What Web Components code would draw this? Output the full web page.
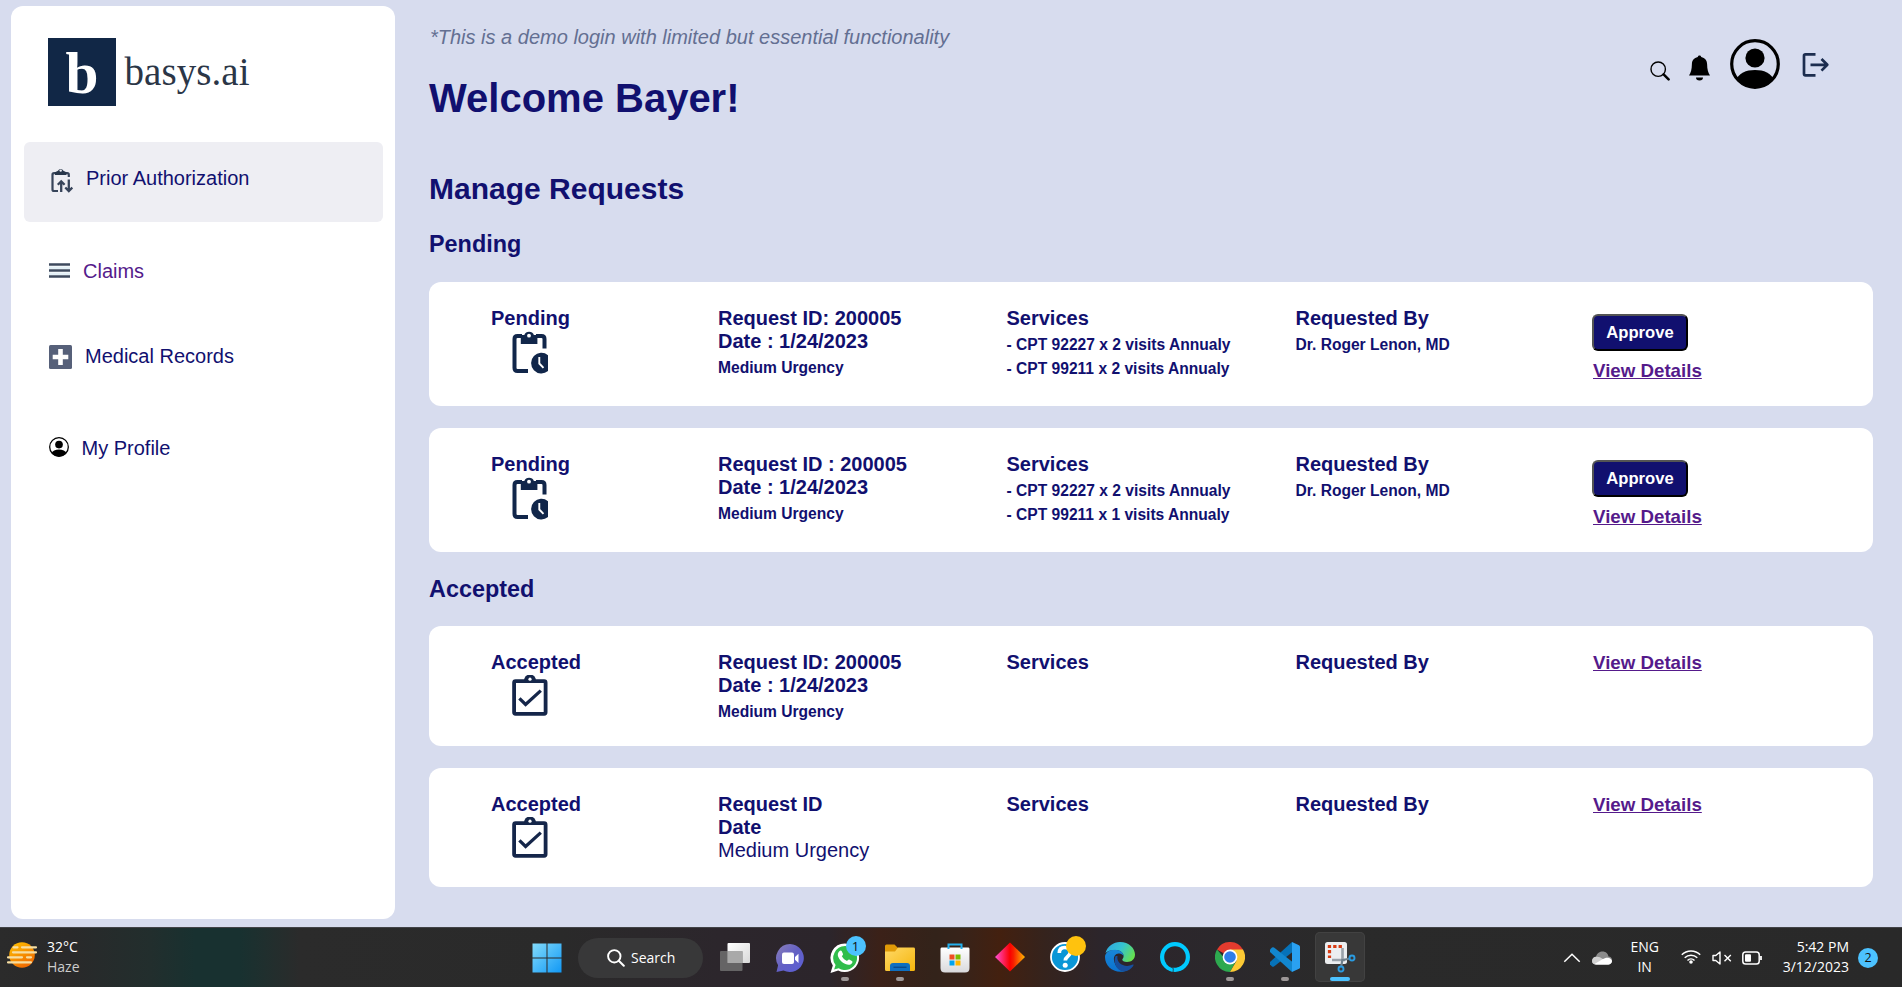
<!DOCTYPE html>
<html lang="en">
<head>
<meta charset="utf-8">
<title>basys.ai - Manage Requests</title>
<style>
html,body{margin:0;padding:0;height:100%;overflow:hidden}
body{font-family:"Liberation Sans",Arial,sans-serif;font-size:20px;line-height:23px;color:#11106f;background:#d7dcee}
</style>
</head>
<body>
<basys-app></basys-app>
<script>
const define = (name, html) => {
  const tpl = document.createElement('template');
  tpl.innerHTML = html;
  customElements.define(name, class extends HTMLElement {
    constructor() {
      super();
      this.attachShadow({mode: 'open'}).appendChild(tpl.content.cloneNode(true));
    }
  });
};

const svg = (w, h, body) => `<svg width="${w}" height="${h}" viewBox="0 0 ${w} ${h}" fill="none">${body}</svg>`;
const person = s => `<svg width="${s}" height="${s}" viewBox="0 0 50 50"><defs><clipPath id="c"><circle cx="25" cy="25" r="24"/></clipPath></defs><circle cx="25" cy="25" r="23.3" fill="none" stroke="#000" stroke-width="3.2"/><circle cx="25" cy="19" r="9.6" fill="#000"/><path clip-path="url(#c)" d="M5 42C9 34 16 31 25 31s16 3 20 11v8H5z" fill="#000"/></svg>`;

const ICONS = {
  prior: svg(23, 26, `<path d="M6.500 6.200H4Q2.500 6.200 2.500 7.700V22.500Q2.500 24 4 24H8M14.500 6.200h2.800q1.500 0 1.500 1.500V10" stroke="#37445a" stroke-width="2.200"/><path d="M5 8V5.200l3-1.500a3 3 0 0 1 5.400 0l3 1.500V8z" fill="#28364a"/><circle cx="10.700" cy="3.600" r="1.200" fill="#eeeef3"/><path d="M11.200 25V14.800M7.800 17.800l3.400-3.500 3.400 3.500M18.800 12.500V24M15.300 20.500l3.500 3.500 3.500-3.500" stroke="#37445a" stroke-width="2.300"/>`),
  menu: svg(21, 16, `<path d="M0 3.500h21v2.500H0zM0 9.500h21v2.500H0z" fill="#e3f0f6"/><path d="M0 1.500h21M0 7.500h21M0 13.500h21" stroke="#3e4a5e" stroke-width="2.400"/>`),
  medical: svg(23, 24, `<rect width="23" height="24" rx="1.5" fill="#566079"/><path d="M11.5 4v16M3.7 12h15.6" stroke="#fff" stroke-width="4.6"/>`),
  profile: person(20),
  avatar: person(50),
  search: svg(20, 20, `<circle cx="8.2" cy="8.2" r="7.2" stroke="#000" stroke-width="1.4"/><path d="M13.6 13.4l5 5" stroke="#000" stroke-width="2.5" stroke-linecap="round"/>`),
  bell: svg(21, 26, `<path d="M10.5 .5c1 0 1.7.7 1.7 1.5 3.9.8 5.8 3.6 5.9 7 .1 5.500 1 8.700 2.900 11.500H0c1.900-2.800 2.800-6 2.900-11.500.1-3.400 2-6.200 5.900-7 0-.8.7-1.500 1.700-1.500z" fill="#000"/><path d="M7 22.600h7a3.500 2.900 0 0 1-7 0z" fill="#000"/>`),
  logout: svg(30, 30, `<rect width="30" height="30" fill="#d5dcf1"/><path d="M15.500 4.300H5.500Q4 4.300 4 5.800v18Q4 25.300 5.500 25.300h10M10.500 14.800h17M21.500 9l5.800 5.800-5.800 5.800" stroke="#1b2d50" stroke-width="2.700" stroke-linejoin="round"/>`),
  pending: svg(36, 44, `<path d="M10 6H5.500Q2.500 6 2.500 9v29q0 3 3 3H16M24 6h5.500q3 0 3 3v9.500" stroke="#11264a" stroke-width="4"/><path d="M8.800 14V5h3.500a5.200 5.200 0 0 1 9.600 0h3.500v9z" fill="#11264a"/><circle cx="17" cy="5.700" r="1.900" fill="#fff"/><path d="M36 25.200a10.300 10.300 0 1 0 0 15.800z" fill="#11264a"/><path d="M27.300 27v6.500l4.200 4.300" stroke="#fff" stroke-width="1.900"/>`),
  accepted: svg(36, 42, `<rect x="2.100" y="6.200" width="31.500" height="32.600" rx="1.500" stroke="#15264a" stroke-width="3.800"/><path d="M12 5.500a6 6 0 0 1 12 0" fill="#15264a"/><circle cx="18" cy="4.200" r="1.600" fill="#fff"/><path d="M7.400 23.300l6.200 6.200L28.800 15.600" stroke="#15264a" stroke-width="3.300"/>`),

  haze: svg(30, 28, `<defs><linearGradient id="g" x1="0" y1="0" x2=".6" y2="1"><stop stop-color="#ffc400"/><stop offset="1" stop-color="#f06a00"/></linearGradient></defs><circle cx="15" cy="14" r="12.800" fill="url(#g)"/><path d="M6.500 6.300h4M15 6.300h14M6 11.300h23M1 16.300h14M20 16.300h4M1 21.300h23" stroke="#f6dea2" stroke-width="2.200" stroke-linecap="round"/>`),
  start: svg(30, 30, `<defs><linearGradient id="g" gradientUnits="userSpaceOnUse" x1="0" y1="0" x2="30" y2="30"><stop stop-color="#84dcfb"/><stop offset="1" stop-color="#0f97f5"/></linearGradient></defs><path d="M.5.5h14v14h-14zM15.500.5h14v14h-14zM.5 15.500h14v14h-14zM15.500 15.500h14v14h-14z" fill="url(#g)"/>`),
  find: svg(18, 18, `<circle cx="7.300" cy="7.300" r="6.200" stroke="#fff" stroke-width="1.900"/><path d="M11.800 11.800l5 5" stroke="#fff" stroke-width="2" stroke-linecap="round"/>`),
  taskview: svg(32, 30, `<defs><linearGradient id="g" x1="0" y1="0" x2="1" y2="1"><stop stop-color="#fff"/><stop offset="1" stop-color="#d8d8d8"/></linearGradient></defs><rect x="8.500" y="1" width="22.500" height="20" rx="1" fill="url(#g)"/><rect x="1" y="9" width="22.500" height="20" rx="1" fill="#707070" fill-opacity=".85"/><path d="M8.500 9h15v12h-15z" fill="#a9a9a9"/>`),
  chat: svg(30, 30, `<defs><linearGradient id="g" x1="0" y1="0" x2="1" y2="1"><stop stop-color="#8b7fb8"/><stop offset=".5" stop-color="#6360c4"/><stop offset="1" stop-color="#5b5fd8"/></linearGradient></defs><path d="M15 1a14 14 0 1 1-6.500 26.500L1.500 29l1.600-6.800A14 14 0 0 1 15 1z" fill="url(#g)"/><rect x="7" y="9.500" width="12" height="11.500" rx="2" fill="#fff"/><path d="M20 14l3.500-3.300v9.300L20 16.800z" fill="#fff"/>`),
  whatsapp: svg(32, 32, `<path d="M16 1.500a14.300 14.300 0 1 1-6.800 27L1.500 31l2.300-7.500A14.300 14.300 0 0 1 16 1.500z" fill="#fff"/><path d="M16 4a12 12 0 1 1-6.300 22.200l-4.600 1.400 1.500-4.500A12 12 0 0 1 16 4z" fill="#30bd4b"/><path d="M10.300 9.200c1-1 2-1 2.500 0l1.200 2.700c.3.700-.7 1.700-1.200 2.200 1 2.200 2.900 4 5.200 5 .7-.7 1.500-1.800 2.200-1.500l2.700 1.300c.9.500.6 1.500 0 2.300-1.500 2-4 1.900-6.500.8-3.500-1.500-6-4-7.200-7.300-.8-2.200-.4-4 1.100-5.500z" fill="#fff"/>`),
  folder: svg(30, 28, `<defs><linearGradient id="g" x1="0" y1="0" x2="1" y2="1"><stop stop-color="#ffd967"/><stop offset="1" stop-color="#f5b50c"/></linearGradient></defs><path d="M0 2q0-1.500 1.500-1.500h8L13 4v5H0z" fill="#e09a07"/><path d="M0 7.500h10L13 3.600h15.500Q30 3.600 30 5v20.500q0 1.500-1.500 1.500h-27Q0 27 0 25.500z" fill="url(#g)"/><path d="M5 27v-5q0-3 3-3h14q3 0 3 3v5z" fill="#0f6fc0"/><path d="M8.500 23.300h13" stroke="#0a4a8c" stroke-width="1.400"/>`),
  store: svg(30, 30, `<defs><linearGradient id="g" x1="0" y1="0" x2="0" y2="1"><stop stop-color="#fff"/><stop offset="1" stop-color="#d9d9dc"/></linearGradient></defs><path d="M1.500 4.500h27Q29.500 4.500 29.500 6v19q0 4.500-4.500 4.500H5Q.5 29.500.5 25V6q0-1.500 1-1.500z" fill="url(#g)"/><path d="M8.500 6V1.500h13V6" stroke="#25b1ee" stroke-width="2"/><path d="M9.500 11.500h5v5h-5z" fill="#f04e23"/><path d="M15.500 11.500h5v5h-5z" fill="#7fba00"/><path d="M9.500 17.500h5v5h-5z" fill="#00a3ee"/><path d="M15.500 17.500h5v5h-5z" fill="#ffb700"/>`),
  diamond: svg(30, 30, `<defs><linearGradient id="g"><stop stop-color="#ff50d8"/><stop offset=".5" stop-color="#fb0000"/><stop offset=".62" stop-color="#f62000"/><stop offset="1" stop-color="#ffb800"/></linearGradient></defs><path d="M15 .5L30 15 15 29.500 0 15z" fill="url(#g)"/>`),
  help: svg(30, 30, `<circle cx="15" cy="15" r="14" fill="#0a96d6" stroke="#fff" stroke-width="1.800"/><path d="M9.300 11c0-4 2.300-5.500 5.400-5.500 3.300 0 5.600 1.700 5.600 4.800 0 4.200-5 4-5 8.200" stroke="#fff" stroke-width="3.700"/><circle cx="15.200" cy="23.300" r="2.500" fill="#fff"/>`),
  edge: svg(30, 30, `<defs><linearGradient id="g" x1="0" y1=".2" x2="1" y2=".6"><stop stop-color="#2fa7e0"/><stop offset=".5" stop-color="#35c3d0"/><stop offset="1" stop-color="#66e04e"/></linearGradient><linearGradient id="h" x1="0" y1="0" x2="0" y2="1"><stop stop-color="#1887d8"/><stop offset="1" stop-color="#0b72cf"/></linearGradient></defs><path d="M.5 11C2.500 4 8.500 0 15 0c9 0 15 6.200 15 12.500 0 4.800-3.600 7.500-8 7.500-3.200 0-4.700-1-4.700-2.200 0-1 1.300-1.500 1.300-3.800C18.600 10.700 15 8 10.500 8 6 8 2.500 9 .5 11z" fill="url(#g)"/><path d="M0 15C0 11 4 7.800 10 7.800c4.900 0 8.500 3 8.600 6.200-1-1.800-3-2.800-5-2.500C9 12 8 16 9.500 20.500 11 25 15 28.500 20 29.200 9 32 0 24.500 0 15z" fill="url(#h)"/><path d="M10.700 14C8 19 10.500 29 19 29.500c4 0 8-3 9.500-6.200.4-.9-.3-1-.8-.7C19.500 26.500 11 21 12.500 14z" fill="#174f9d"/>`),
  alexa: svg(30, 30, `<circle cx="15" cy="15" r="12.900" stroke="#00caff" stroke-width="4.200"/><path d="M9 26.500c3 .3 4.300 1 4 3.300l-3.500-.8z" fill="#00caff"/><path d="M6.500 21.500c1.500 2.800 4.500 3.500 6 4.300 1.200.8.800 2.700.5 4" stroke="#2d262b" stroke-width=".9"/><path d="M14 26.500c4-.7 7-2 9.500-5l1 3.500-5 4H13.800z" fill="#00caff"/>`),
  chrome: svg(30, 30, `<path d="M15 15L2 7.500A15 15 0 0 1 28 7.500z" fill="#e33b2e"/><path d="M15 15H8.500L2 7.500A15 15 0 0 0 15 30l6-11z" fill="#2da94f"/><path d="M15 7.500H28A15 15 0 0 1 15 30l6.500-11.300z" fill="#fcc934"/><circle cx="15" cy="15" r="7.400" fill="#fff"/><circle cx="15" cy="15" r="5.800" fill="#2f7de9"/>`),
  vscode: svg(30, 30, `<path d="M22 0L0 20v2.500l2 2q1 .5 2 0L22.500 10z" fill="#0672b8"/><path d="M22 30L0 10V7.500l2-2q1-.5 2 0L22.500 20z" fill="#1287cf"/><path d="M22 0l7 3.200q1 .6 1 1.500v20.600q0 1-1 1.500L22 30z" fill="#2aa1f1"/>`),
  snip: svg(32, 32, `<rect x="1" y="1" width="22" height="22" rx="2.500" fill="#eceef0"/><path d="M3.800 5.500H18M5.500 9V17" stroke="#d83b12" stroke-width="3.200" stroke-dasharray="3.300 2.100"/><path d="M18.500 7v13M8 19h13" stroke="#9aa2aa" stroke-width="2.600"/><path d="M18.500 18L17.300 25M19 19l7-1.500" stroke="#70808c" stroke-width="2.200"/><circle cx="17" cy="28" r="2.500" stroke="#2a9be0" stroke-width="1.900"/><circle cx="28" cy="17" r="2.500" stroke="#2a9be0" stroke-width="1.900"/>`),
  up: svg(18, 10, `<path d="M1.300 8.700L9 1.200l7.700 7.500" stroke="#fff" stroke-width="1.500"/>`),
  cloud: svg(20, 14, `<path d="M0 10a4 4 0 0 1 4-4.200C5 2 7.800.5 10.500.5c3.500 0 5.500 2.300 6 5a4 4 0 0 1 3.500 4.300c0 2-1.700 3.700-3.500 3.700H4C1.500 13.500 0 12 0 10z" fill="#8c8c8c"/><path d="M0 10c0-2.500 2-4.500 4.500-4.300 2.500-.2 4 .8 6 2l7.500 4.600-1.500 1.200H4C1.500 13.500 0 12 0 10z" fill="#d2d2d2"/><path d="M2.500 13l8-4.700c2.500-1.500 6-2.300 8.300-.3 1 1 1.200 1.500 1.200 2.300 0 1.700-1.700 3.200-3.500 3.200H4z" fill="#fff"/>`),
  wifi: svg(20, 15, `<path d="M.8 5.800a13 13 0 0 1 18.400 0M3.700 8.800a9 9 0 0 1 12.600 0M6.500 11.500a5 5 0 0 1 7 0" stroke="#fff" stroke-width="1.500"/><circle cx="10" cy="13" r="1.800" fill="#fff"/>`),
  mute: svg(20, 14, `<path d="M1 4.500h2.800L8 1v12L3.800 9.500H1z" stroke="#fff" stroke-width="1.400" stroke-linejoin="round"/><path d="M12.500 4l6.300 6.300M18.800 4l-6.300 6.300" stroke="#fff" stroke-width="1.400"/>`),
  battery: svg(20, 14, `<rect x=".8" y="1" width="16.400" height="12" rx="2.800" stroke="#fff" stroke-width="1.500"/><rect x="3" y="3.300" width="6" height="7.400" rx="1" fill="#fff"/><path d="M19 5v4" stroke="#fff" stroke-width="1.800"/>`)
};

customElements.define('ui-icon', class extends HTMLElement {
  connectedCallback() {
    if (this.shadowRoot) return;
    this.attachShadow({mode: 'open'}).innerHTML =
      `<style>:host{display:block;flex:none;line-height:0}svg{display:block}</style>${ICONS[this.getAttribute('name')]}`;
  }
});

define('brand-logo', `<style>
:host{display:flex;align-items:flex-start;box-sizing:border-box;font-family:"Liberation Serif",serif;padding:32px 0 0 37px;height:136px}
.mark{width:68px;height:68px;background:#112746}
svg{display:block;overflow:visible}
</style>
<div class="mark"><svg width="68" height="68"><text x="17.500" y="55" font-size="60" font-weight="700" fill="#fff" textLength="33" lengthAdjust="spacingAndGlyphs">b</text></svg></div>
<svg width="140" height="68"><text x="8.500" y="46.500" font-size="39" fill="#2b3647" textLength="125" lengthAdjust="spacing">basys.ai</text></svg>`);

define('nav-item', `<style>
:host{display:flex;align-items:center;box-sizing:border-box;margin:0 12px 0 13px;padding-left:25px;white-space:nowrap;flex:none}
:host([active]){background:#eeeef3;border-radius:6px;padding-bottom:7px}
:host([visited]){color:#551a8b}
</style><slot name="icon"></slot><slot></slot>`);

define('side-bar', `<style>
:host{display:flex;flex-direction:column;width:384px;height:913px;margin:6px 0 0 11px;background:#fff;border-radius:12px;flex:none}
nav{display:flex;flex-direction:column}
</style>
<brand-logo></brand-logo>
<nav>
<nav-item active style="height:80px"><ui-icon slot="icon" name="prior" style="margin:2px 13px 0 1px"></ui-icon>Prior Authorization</nav-item>
<nav-item visited style="height:98px"><ui-icon slot="icon" name="menu" style="margin-right:13px"></ui-icon>Claims</nav-item>
<nav-item style="height:73px"><ui-icon slot="icon" name="medical" style="margin:1px 13px 0 0"></ui-icon>Medical Records</nav-item>
<nav-item style="height:110px"><ui-icon slot="icon" name="profile" style="margin:0 12.500px 2px 0"></ui-icon>My Profile</nav-item>
</nav>`);

define('header-tools', `<style>
:host{display:flex;align-items:flex-start;padding-right:68px}
</style>
<ui-icon name="search" style="margin:35px 19px 0 0"></ui-icon>
<ui-icon name="bell" style="margin:29px 20px 0 0"></ui-icon>
<ui-icon name="avatar" style="margin:13px 20px 0 0"></ui-icon>
<ui-icon name="logout" style="margin:24px -25px 0 0"></ui-icon>`);

define('request-card', `<style>
:host{display:grid;grid-template-columns:227px 288.500px 289px 296.500px 1fr;box-sizing:border-box;height:124px;padding:25px 0 0 62px;margin-bottom:22px;background:#fff;border-radius:12px;font-weight:700;white-space:nowrap}
</style>
<div><slot name="status"></slot></div><div><slot name="request"></slot></div><div><slot name="services"></slot></div><div><slot name="by"></slot></div><div><slot name="actions"></slot></div>`);

define('small-line', `<style>:host{display:block;font-size:15.600px;line-height:24px}</style><slot></slot>`);

define('view-link', `<style>:host{display:block;padding-left:1px}a{color:#551a8b;font-size:18.720px;text-decoration:underline}</style><a><slot></slot></a>`);

define('approve-button', `<style>:host{display:block;margin:7px 0 5px}
button{display:block;box-sizing:border-box;width:96px;height:37px;padding:0;border:2px outset #000;border-radius:6px;background:#11106f;color:#fff;font:700 16.600px "Liberation Sans",Arial,sans-serif}</style><button><slot></slot></button>`);

const status = s => `<div slot="status">${s}<ui-icon name="${s.toLowerCase()}" style="margin:${s === 'Pending' ? '0' : '1px'} 0 0 21px"></ui-icon></div>`;
const pendingCard = (id, n) => `<request-card>${status('Pending')}
<div slot="request">${id}<br>Date : 1/24/2023<small-line style="margin-top:3px">Medium Urgency</small-line></div>
<div slot="services">Services<small-line style="margin-top:3px">- CPT 92227 x 2 visits Annualy</small-line><small-line>- CPT 99211 x ${n} visits Annualy</small-line></div>
<div slot="by">Requested By<small-line style="margin-top:3px">Dr. Roger Lenon, MD</small-line></div>
<div slot="actions"><approve-button>Approve</approve-button><view-link style="margin-top:8px">View Details</view-link></div></request-card>`;
const acceptedCard = (body, h) => `<request-card style="height:${h}px">${status('Accepted')}
<div slot="request">${body}</div><div slot="services">Services</div><div slot="by">Requested By</div>
<div slot="actions"><view-link>View Details</view-link></div></request-card>`;

define('request-board', `<style>
:host{display:block;flex:1;padding:26px 29px 0 34px}
header{display:flex;justify-content:space-between;height:146px}
.note{font-style:italic;color:#636f92;padding-left:1px}
h1,h2,h3{margin:0;font-weight:700}
h1{font-size:40px;line-height:46px;margin-top:26px}
h2{font-size:30px;line-height:34px}
h3{font-size:23.400px;line-height:27px;padding-top:2px;margin-bottom:23px}
h2+h3{margin-top:23px;margin-bottom:24px}
</style>
<header><div><div class="note">*This is a demo login with limited but essential functionality</div><h1>Welcome Bayer!</h1></div><header-tools></header-tools></header>
<h2>Manage Requests</h2>
<h3>Pending</h3>
${pendingCard('Request ID: 200005', 2)}${pendingCard('Request ID : 200005', 1)}
<h3>Accepted</h3>
${acceptedCard('Request ID: 200005<br>Date : 1/24/2023<small-line style="margin-top:3px">Medium Urgency</small-line>', 120)}
${acceptedCard('Request ID<br>Date<div style="font-weight:400">Medium Urgency</div>', 119)}`);

define('task-slot', `<style>
:host{position:relative;display:flex;align-items:center;justify-content:center;width:55px;height:59px;flex:none}
:host([current])::before{content:"";position:absolute;inset:4px 2px 5px 3px;border-radius:5px;background:#383838;box-shadow:inset 0 0 0 1px #424242}
::slotted(ui-icon){position:relative}
:host([running])::after,:host([current])::after{content:"";position:absolute;left:23.500px;bottom:6px;width:8px;height:4px;border-radius:2px;background:#9d9797}
:host([current])::after{left:17.500px;width:20px;background:#4cc2ff}
::slotted(b){position:absolute;left:28.500px;top:8px;width:20px;height:20px;line-height:20px;border-radius:50%;text-align:center;font-size:13px;font-weight:400;color:#111;background:#4cc2ff;z-index:1}
::slotted(b.warn){background:#ffc20e}
</style><slot></slot>`);

define('task-bar', `<style>
:host{display:grid;grid-template-columns:519px 1fr auto;height:60px;box-sizing:border-box;border-top:1px solid #424347;color:#fff;font:14px/20px "Open Sans","Noto Sans",sans-serif;
background:linear-gradient(90deg,#2b2b2b 0,#29292a 70px,#222e2d 150px,#183130 195px,#183130 240px,#202f2e 265px,#2b2b2b 300px,#2a2a2a 560px,#2c262c 720px,#2c252b 830px,#3b2118 880px,#33231a 935px,#37231a 960px,#43200f 1000px,#35231d 1045px,#2c252b 1100px,#2b282c 1230px,#2a2a2a 1330px,#292929)}
.weather,.apps,.tray{display:flex;align-items:center}
.weather{padding-left:7px;gap:10px}
.weather div{white-space:pre;padding-bottom:1px}
.weather span{color:#ccc}
.search{display:flex;align-items:center;box-sizing:border-box;width:125px;height:40px;margin:0 4px;padding-left:29px;gap:6px;border-radius:20px;background:#383839;font-size:14px}
.tray div{padding-bottom:1px}
.badge{width:20px;height:20px;border-radius:50%;background:#4cc2ff;color:#111;text-align:center;font-size:12.500px;margin:0 24px 0 9px}
</style>
<div class="weather"><ui-icon name="haze" style="margin-top:-5px"></ui-icon><div>32°C<br><span>Haze</span></div></div>
<div class="apps">
<task-slot><ui-icon name="start"></ui-icon></task-slot>
<div class="search"><ui-icon name="find"></ui-icon>Search</div>
<task-slot><ui-icon name="taskview" style="margin-top:-2px"></ui-icon></task-slot>
<task-slot><ui-icon name="chat"></ui-icon></task-slot>
<task-slot running><ui-icon name="whatsapp"></ui-icon><b>1</b></task-slot>
<task-slot running><ui-icon name="folder"></ui-icon></task-slot>
<task-slot><ui-icon name="store"></ui-icon></task-slot>
<task-slot><ui-icon name="diamond" style="margin-top:-2px"></ui-icon></task-slot>
<task-slot><ui-icon name="help" style="margin-top:-2px"></ui-icon><b class="warn"></b></task-slot>
<task-slot><ui-icon name="edge" style="margin-top:-1px"></ui-icon></task-slot>
<task-slot><ui-icon name="alexa" style="margin-top:-1px"></ui-icon></task-slot>
<task-slot running><ui-icon name="chrome" style="margin-top:-1px"></ui-icon></task-slot>
<task-slot running><ui-icon name="vscode" style="margin-top:-1px"></ui-icon></task-slot>
<task-slot current><ui-icon name="snip" style="margin-top:-1px"></ui-icon></task-slot>
</div>
<div class="tray">
<ui-icon name="up" style="margin-right:11px"></ui-icon><ui-icon name="cloud"></ui-icon>
<div style="width:66px;text-align:center">ENG<br>IN</div>
<ui-icon name="wifi" style="margin:-2px 11px 0 3px"></ui-icon><ui-icon name="mute"></ui-icon><ui-icon name="battery" style="margin:0 21px 0 10px"></ui-icon>
<div style="text-align:right">5:42 PM<br>3/12/2023</div><span class="badge">2</span>
</div>`);

define('basys-app', `<style>
:host{display:flex;flex-direction:column;width:1902px;height:987px;overflow:hidden}
main{display:flex;height:927px;flex:none}
</style><main><side-bar></side-bar><request-board></request-board></main><task-bar></task-bar>`);
</script>
</body>
</html>
